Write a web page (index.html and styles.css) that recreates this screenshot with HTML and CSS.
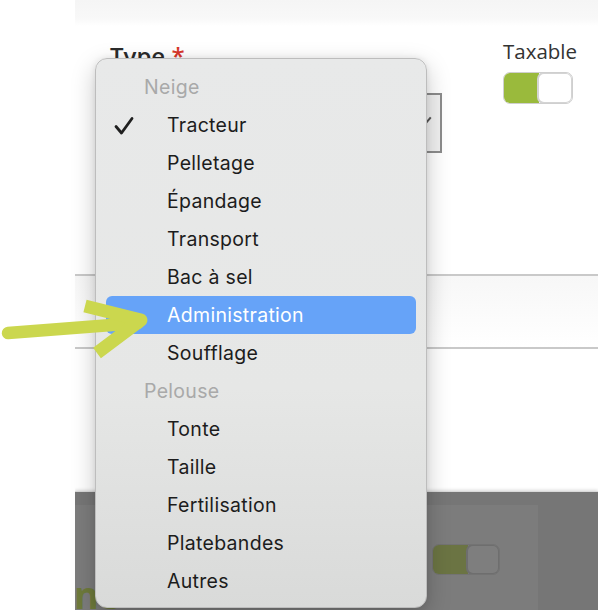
FILE: index.html
```html
<!DOCTYPE html>
<html lang="fr">
<head>
<meta charset="utf-8">
<title>Type</title>
<link rel="stylesheet" href="styles.css">
</head>
<body>
<div class="page">
  <div class="gutter"></div>
  <div class="main">
    <div class="topstrip"></div>
    <div class="form-row">
      <div class="col-type">
        <div class="label-type">Type <span class="req">*</span></div>
        <div class="select-box"><span class="chev"></span></div>
      </div>
      <div class="col-tax">
        <div class="label-tax">Taxable</div>
        <div class="toggle"><span class="toggle-on"></span><span class="toggle-knob"></span></div>
      </div>
    </div>
    <div class="field"></div>
    <div class="backdrop">
      <div class="backdrop-panel">
        <div class="toggle dim"><span class="toggle-on"></span><span class="toggle-knob"></span></div>
        <div class="ghost-title">ne</div>
      </div>
    </div>
  </div>
</div>

<div class="menu">
  <div class="menu-header">Neige</div>
  <div class="menu-item checked">
    <svg class="check" width="22" height="20" viewBox="0 0 22 20"><path d="M3 10.5 L8.5 17 L19 2.5" fill="none" stroke="#1f1f1f" stroke-width="2.8" stroke-linecap="round" stroke-linejoin="round"/></svg>
    Tracteur
  </div>
  <div class="menu-item">Pelletage</div>
  <div class="menu-item">Épandage</div>
  <div class="menu-item">Transport</div>
  <div class="menu-item">Bac à sel</div>
  <div class="menu-item active">Administration</div>
  <div class="menu-item">Soufflage</div>
  <div class="menu-header">Pelouse</div>
  <div class="menu-item">Tonte</div>
  <div class="menu-item">Taille</div>
  <div class="menu-item">Fertilisation</div>
  <div class="menu-item">Platebandes</div>
  <div class="menu-item">Autres</div>
</div>

<svg class="arrow" width="160" height="80" viewBox="0 0 160 80">
  <path d="M8 43 L138 33" fill="none" stroke="#cbd74e" stroke-width="12.5" stroke-linecap="round"/>
  <path d="M85 16 L141 30 L97 63" fill="none" stroke="#cbd74e" stroke-width="13" stroke-linecap="butt" stroke-linejoin="round"/>
</svg>
</body>
</html>
```

FILE: styles.css
```css
html, body {
  margin: 0;
  padding: 0;
  background: #ffffff;
}

body {
  width: 598px;
  height: 610px;
  overflow: hidden;
  position: relative;
  font-family: "Open Sans", "Liberation Sans", sans-serif;
}

.page {
  display: flex;
  height: 610px;
}

.gutter {
  width: 75px;
  flex: none;
  background: #ffffff;
}

.main {
  flex: 1;
  display: flex;
  flex-direction: column;
  background: #ffffff;
  overflow: hidden;
}

.topstrip {
  height: 26px;
  background: linear-gradient(#f5f5f5, #f8f8f8 70%, #ffffff);
  flex: none;
}

.form-row {
  display: flex;
  padding-left: 35px;
  height: 160px;
  flex: none;
}

.col-type {
  width: 332px;
  flex: none;
  padding-top: 14px;
}

.label-type {
  font-size: 24px;
  font-weight: 600;
  color: #2b2b2b;
  line-height: 32px;
  height: 32px;
}

.req {
  color: #d8372b;
}

.select-box {
  margin-top: 21px;
  height: 60px;
  border: 2px solid #8c8c8c;
  border-left: none;
  box-sizing: border-box;
  background: #f1f1f1;
  position: relative;
}

.chev {
  position: absolute;
  right: 8px;
  top: 24px;
  width: 7px;
  height: 2px;
  background: #555;
  transform: rotate(-50deg);
}

.col-tax {
  margin-left: 61px;
  padding-top: 11px;
}

.label-tax {
  font-size: 20.5px;
  color: #333333;
  line-height: 28px;
}

.toggle {
  margin-top: 7px;
  width: 70px;
  height: 32px;
  border-radius: 7px;
  display: flex;
  overflow: hidden;
  box-sizing: border-box;
  border: 1px solid #cfcfcf;
}

.toggle-on {
  width: 35px;
  background: #9aba3c;
}

.toggle-knob {
  flex: 1;
  background: #ffffff;
  border: 2px solid #d4d4d4;
  border-radius: 7px;
  margin: -1px -1px -1px -2px;
}

.field {
  margin-top: 88px;
  height: 71px;
  border-top: 2px solid #c9c9c9;
  border-bottom: 2px solid #c9c9c9;
  background: linear-gradient(#f7f7f7, #ffffff);
  flex: none;
}

.backdrop {
  margin-top: 142px;
  flex: 1;
  background: #767676;
  border-top: 1px solid #d9d9d9;
  box-shadow: 0 -1px 3px rgba(0,0,0,0.15);
  padding-top: 13px;
  overflow: hidden;
}

.backdrop-panel {
  width: 463px;
  height: 120px;
  background: #7c7c7c;
  position: relative;
  padding-top: 39px;
  box-sizing: border-box;
}

.toggle.dim {
  margin: 0 0 0 357px;
  width: 68px;
  height: 31px;
  border-color: #737373;
}

.toggle.dim .toggle-on {
  background: #6b7443;
}

.toggle.dim .toggle-knob {
  background: #7e7e7e;
  border-color: #6e6e6e;
}

.ghost-title {
  margin-top: 0;
  margin-left: -1px;
  font-size: 38px;
  font-weight: 700;
  color: #6e7a3b;
  line-height: 38px;
  letter-spacing: -1px;
}

/* dropdown menu */
.menu {
  position: absolute;
  left: 95px;
  top: 58px;
  width: 332px;
  height: 550px;
  box-sizing: border-box;
  padding: 9px 10px 8px 10px;
  border: 1px solid #bdbdbd;
  border-radius: 12px;
  background: linear-gradient(#e8e9e9, #e6e7e6 60%, #d9dad9);
  box-shadow: 0 8px 24px rgba(0,0,0,0.22), 0 0 6px rgba(0,0,0,0.08);
  font-family: Inter, "Noto Sans", sans-serif;
  font-size: 19.5px;
  letter-spacing: 0.3px;
}

.menu-header {
  height: 38px;
  line-height: 38px;
  padding-left: 38px;
  color: #a9a9a9;
}

.menu-item {
  height: 38px;
  line-height: 38px;
  padding-left: 61px;
  color: #1c1c1c;
  border-radius: 6px;
  position: relative;
}

.menu-item.active {
  background: #66a3f8;
  color: #ffffff;
}

.check {
  position: absolute;
  left: 7px;
  top: 10px;
}

.arrow {
  position: absolute;
  left: 0;
  top: 290px;
}
```
